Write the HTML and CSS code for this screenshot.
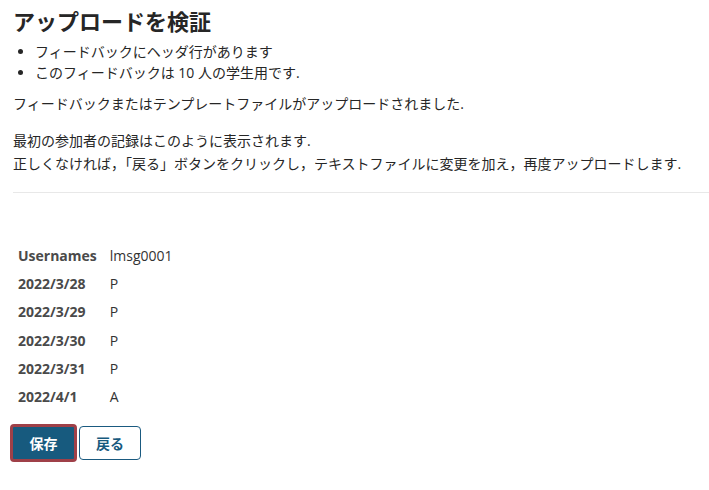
FILE: index.html
```html
<!DOCTYPE html>
<html lang="ja">
<head>
  <meta charset="UTF-8">
  <title>アップロードを検証</title>
  <link rel="stylesheet" href="styles.css">
</head>
<body>
  <h1 class="title">アップロードを検証</h1>
  <ul class="facts">
    <li>フィードバックにヘッダ行があります</li>
    <li>このフィードバックは 10 人の学生用です.</li>
  </ul>
  <p class="note">フィードバックまたはテンプレートファイルがアップロードされました.</p>
  <p class="note">最初の参加者の記録はこのように表示されます.<br>正しくなければ，「戻る」ボタンをクリックし，テキストファイルに変更を加え，再度アップロードします.</p>
  <hr class="divider">

  <table class="preview">
    <tbody>
      <tr><th>Usernames</th><td>lmsg0001</td></tr>
      <tr><th>2022/3/28</th><td>P</td></tr>
      <tr><th>2022/3/29</th><td>P</td></tr>
      <tr><th>2022/3/30</th><td>P</td></tr>
      <tr><th>2022/3/31</th><td>P</td></tr>
      <tr><th>2022/4/1</th><td>A</td></tr>
    </tbody>
  </table>

  <div class="actions">
    <button class="btn btn-primary">保存</button>
    <button class="btn btn-secondary">戻る</button>
  </div>
</body>
</html>
```

FILE: styles.css
```css
body {
  margin: 0;
  padding: 8px 0 0 13px;
  font-family: "Open Sans", "Noto Sans CJK JP", sans-serif;
  font-size: 14px;
  color: #262626;
  background: #fff;
}

.title {
  margin: 0;
  font-size: 22px;
  font-weight: bold;
  line-height: 26px;
  color: #262626;
}

.facts {
  margin: 7px 0 0;
  padding-left: 22px;
  line-height: 21px;
}

.note {
  margin: 9px 0 0;
  line-height: 23px;
}

.note + .note {
  margin-top: 14px;
}

.divider {
  border: none;
  border-top: 1px solid #e8e8e8;
  margin: 17px 0 0;
}

.preview {
  border-collapse: collapse;
  margin-top: 48px;
  margin-left: 1px;
}

.preview th,
.preview td {
  padding: 0 4px;
  height: 28.3px;
  text-align: left;
  vertical-align: middle;
}

.preview th {
  font-weight: bold;
  color: #4a4a4a;
  padding-right: 9px;
}

.preview td {
  color: #333;
}

.actions {
  display: flex;
  align-items: center;
  gap: 2px;
  margin-top: 13px;
  margin-left: -3px;
}

.btn {
  font-family: "Open Sans", "Noto Sans CJK JP", sans-serif;
  font-size: 14px;
  font-weight: bold;
  cursor: pointer;
  border-radius: 4px;
}

.btn-primary {
  background: #175a7e;
  color: #fff;
  border: 3px solid #9f4048;
  width: 67px;
  height: 38px;
}

.btn-secondary {
  background: #fff;
  color: #175a7e;
  border: 1px solid #1a5a80;
  width: 62px;
  height: 34px;
}
```
